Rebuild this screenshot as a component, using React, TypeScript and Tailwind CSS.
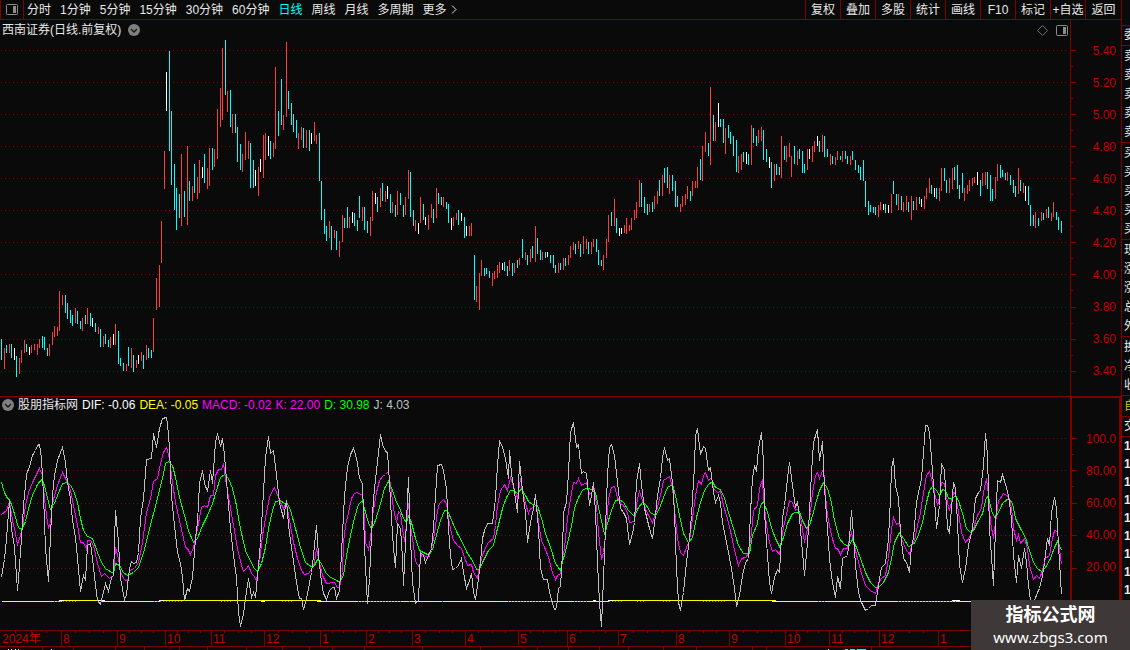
import type { ReactNode } from 'react'

const periods = ['分时', '1分钟', '5分钟', '15分钟', '30分钟', '60分钟', '日线', '周线', '月线', '多周期', '更多']
const tools = ['复权', '叠加', '多股', '统计', '画线', 'F10', '标记', '+自选', '返回']

// r = up, c = down, w = flat; then x, top, bottom on the chart canvas
const candles = `
c 1 339 360,r 4 348 369,c 6 345 353,r 9 344 353,c 11 344 358,w 14 348 360,c 16 356 377,r 19 358 374,r 21 350 363,r 24 340 353,
c 26 344 352,w 29 347 355,r 31 345 353,r 34 344 350,r 37 344 355,r 39 339 348,c 42 336 348,c 44 337 350,c 47 348 356,r 49 344 356,
r 52 332 345,r 54 326 337,r 57 327 336,r 59 291 331,r 62 295 305,c 65 295 313,c 67 303 319,c 70 310 323,c 72 315 326,r 75 308 323,
c 77 311 324,c 80 321 329,r 82 318 331,c 85 315 324,r 87 308 324,c 90 313 326,w 92 318 327,c 95 323 332,r 98 327 334,c 100 329 347,
r 103 336 347,c 105 334 344,c 108 340 347,r 110 337 348,w 113 334 345,r 115 324 345,c 118 331 364,c 120 358 366,c 123 363 371,r 126 364 371,
c 128 347 366,r 131 348 368,c 133 355 372,r 136 360 368,w 138 355 364,r 141 352 361,c 143 355 369,r 146 345 360,c 148 348 358,c 151 350 358,
r 153 318 352,r 156 278 310,r 159 265 307,r 161 221 263,r 164 151 189,w 166 72 111,c 169 51 151,c 171 111 185,c 174 164 210,c 176 188 230,
c 179 194 218,r 181 154 226,c 184 191 217,r 187 146 225,c 189 181 201,r 192 186 201,c 194 164 193,r 197 177 199,r 199 160 193,w 202 167 178,
c 204 154 183,r 207 168 189,r 209 148 186,c 212 148 170,r 214 149 167,r 217 109 159,r 220 88 127,r 222 48 120,c 225 40 95,r 227 91 112,
c 230 90 127,r 232 114 133,c 235 114 133,c 237 127 162,c 240 144 170,r 242 154 172,r 245 132 160,r 248 141 159,c 250 143 188,c 253 160 188,
w 255 170 186,r 258 167 196,w 260 159 172,r 263 135 178,r 265 133 160,w 268 136 156,c 270 141 159,r 273 143 157,r 275 67 149,c 278 111 136,
c 281 79 125,r 283 115 130,r 286 42 117,c 288 91 109,c 291 103 125,c 293 114 132,c 296 120 138,r 298 133 149,r 301 127 140,c 303 128 148,
r 306 130 148,c 309 130 151,w 311 133 144,r 314 122 141,r 316 135 144,c 319 133 181,c 321 181 220,c 324 209 234,c 326 226 241,r 329 221 238,
c 331 226 250,r 334 230 238,c 336 231 250,r 339 241 257,r 342 215 242,c 344 218 228,c 347 207 228,r 349 217 228,w 352 212 223,c 354 213 226,
c 357 220 231,c 359 196 218,r 362 207 221,c 364 207 230,c 367 221 233,r 370 217 236,r 372 191 221,w 375 193 204,c 377 197 212,r 380 188 207,
c 382 183 201,r 385 191 202,w 387 186 199,c 390 194 213,r 392 202 213,c 395 205 217,r 397 191 215,c 400 193 205,c 403 205 217,r 405 197 215,
r 408 170 199,c 410 172 217,c 413 210 226,r 415 220 231,w 418 223 234,r 420 197 223,c 423 204 220,w 425 217 225,r 428 215 230,r 431 204 218,
c 433 209 223,r 436 188 218,c 438 193 204,c 441 197 205,r 443 197 207,c 446 202 209,c 448 204 223,w 451 218 230,r 453 217 226,r 456 213 220,
c 458 210 225,w 461 213 221,c 464 217 238,w 466 226 236,r 469 226 236,r 471 223 236,c 474 255 300,r 476 286 302,r 479 273 310,r 481 260 276,
c 484 268 276,c 486 268 274,c 489 271 278,r 492 273 286,r 494 271 279,r 497 265 278,r 499 262 273,w 502 263 270,c 504 262 271,c 507 266 276,
r 509 260 271,c 512 263 276,r 514 263 273,c 517 260 268,r 519 258 265,c 522 239 258,r 525 252 260,c 527 255 265,r 530 249 262,c 532 246 258,
r 535 226 262,c 537 238 254,c 540 250 260,r 542 252 260,c 545 252 258,w 547 252 257,c 550 255 263,c 553 255 268,c 555 265 273,r 558 263 273,
c 560 263 270,r 563 258 270,c 565 258 266,r 568 255 265,r 570 246 258,r 573 242 250,c 575 244 254,r 578 241 249,c 580 244 257,r 583 236 254,
r 586 239 249,c 588 242 254,r 591 242 254,r 593 239 247,c 596 239 252,c 598 250 265,c 601 260 266,r 603 255 270,r 606 239 258,r 608 215 242,
c 611 212 226,r 614 199 226,c 616 218 233,w 619 228 236,w 621 228 234,r 624 225 233,r 626 218 234,r 629 225 231,r 631 218 230,r 634 210 220,
r 636 202 218,r 639 180 207,c 641 183 207,c 644 197 213,c 647 204 215,r 649 204 212,c 652 202 212,r 654 196 209,r 657 191 204,c 659 180 196,
r 662 175 196,c 664 168 183,c 667 167 188,r 669 175 194,c 672 175 191,c 675 181 207,c 677 196 207,r 680 204 212,r 682 196 207,r 685 194 205,
r 687 186 199,c 690 191 201,r 692 181 196,r 695 181 188,r 697 167 188,c 700 159 180,r 702 146 181,r 705 132 152,c 708 143 156,r 710 87 165,
c 713 115 141,r 715 122 141,w 718 103 127,c 720 119 127,c 723 119 143,r 725 128 154,c 728 125 138,c 730 132 144,c 733 136 156,c 736 140 172,
r 738 156 173,r 741 154 170,c 743 152 162,w 746 152 164,c 748 154 165,r 751 125 165,c 753 128 143,c 756 136 146,r 758 130 143,r 761 127 141,
c 763 130 160,c 766 149 162,w 769 157 168,c 771 162 188,r 774 164 181,c 776 164 175,c 779 167 175,r 781 136 178,c 784 146 160,r 786 146 162,
r 789 143 157,r 791 156 177,c 794 146 164,r 797 151 165,c 799 149 159,c 802 151 173,c 804 164 173,r 807 149 170,w 809 149 159,r 812 146 162,
r 814 141 152,w 817 136 146,c 819 141 152,r 822 135 152,c 824 136 157,c 827 149 157,r 830 154 165,c 832 156 164,r 835 157 165,r 837 151 160,
c 840 156 160,r 842 151 162,c 845 151 159,c 847 156 164,r 850 156 165,c 852 151 160,c 855 160 170,c 858 165 173,c 860 167 180,c 863 160 181,
c 865 181 207,c 868 201 215,c 870 205 212,c 873 207 213,c 875 207 215,r 878 205 217,r 880 202 210,w 883 204 210,c 885 204 213,w 888 205 213,
r 891 194 213,c 893 181 194,c 896 194 205,r 898 194 210,c 901 196 210,r 903 202 212,r 906 196 210,c 908 202 212,r 911 196 220,c 913 201 210,
r 916 197 210,c 919 197 204,w 921 199 207,r 924 196 209,r 926 188 199,r 929 178 193,c 931 185 194,w 934 188 197,c 936 188 199,r 939 188 201,
r 941 168 191,c 944 168 181,c 946 180 193,r 949 178 193,r 952 168 189,c 954 167 180,c 957 165 189,c 959 185 199,c 962 173 193,r 964 188 201,
r 967 185 194,r 969 180 191,r 972 178 186,r 974 177 183,w 977 172 185,c 980 180 196,r 982 173 186,r 985 172 185,c 987 172 189,c 990 175 201,
c 992 189 201,r 995 177 199,r 997 164 181,c 1000 165 178,c 1002 170 177,c 1005 173 180,r 1007 172 181,c 1010 175 185,c 1013 180 193,
c 1015 186 197,r 1018 168 194,c 1020 180 191,r 1023 183 193,w 1025 186 201,c 1028 186 205,c 1030 205 226,c 1033 215 226,r 1035 212 228,
c 1038 218 226,r 1041 212 221,c 1043 213 220,r 1046 209 218,c 1048 207 218,r 1051 213 221,r 1053 202 217,c 1056 212 220,c 1058 217 230,
c 1061 221 233`
  .split(',')
  .map((row) => {
    const [kind, x, top, bottom] = row.trim().split(' ')
    return { kind, x: Number(x), top: Number(top), bottom: Number(bottom) }
  })

const lineJ = `
1,577 4,559 6,538 9,500 11,528 14,547 17,590 19,565 21,538 23,505 26,474 29,466 32,455 35,450 37,445 39,444 41,458 43,495 45,548 48,581
50,535 52,495 54,475 57,460 60,452 62,447 65,462 67,482 70,498 72,520 75,537 77,558 80,591 83,575 85,580 87,545 90,543 92,558 95,585
97,600 100,604 103,592 105,583 108,591 111,577 113,575 115,510 118,542 120,578 124,599 126,594 129,568 131,561 133,563 136,562 138,552
140,518 143,498 146,459 151,458 153,433 156,447 159,428 162,418 166,417 167,423 169,448 171,495 174,525 177,552 180,563 182,577 184,600
187,588 189,591 192,577 195,538 197,522 199,483 202,470 204,483 207,491 210,470 212,483 215,442 217,433 220,446 222,438 224,455 227,492
230,528 233,555 236,577 238,612 240,626 243,613 245,598 248,578 251,597 253,592 255,597 258,565 260,542 262,508 265,457 268,436 270,453
273,450 276,475 279,502 283,518 286,500 288,525 291,547 294,568 297,588 299,598 301,598 303,609 306,598 308,588 311,572 313,555 316,525
318,555 321,582 323,593 326,599 329,590 332,587 334,587 336,598 339,590 341,552 344,495 347,467 350,454 353,448 355,454 357,463 359,478
362,483 364,545 366,585 367,603 369,578 371,535 373,498 376,470 378,452 380,434 382,444 385,451 387,452 389,482 391,518 393,548 395,567
397,523 400,528 402,558 403,585 405,542 408,477 410,538 412,582 415,603 418,600 420,552 423,555 425,562 428,555 431,548 433,528 435,495
437,465 441,464 443,470 446,488 448,528 450,555 452,569 455,568 458,565 461,558 463,572 466,588 469,580 471,573 473,592 475,599 477,585
480,562 482,538 484,530 487,523 492,523 495,498 497,465 499,440 502,447 505,458 508,478 509,450 511,473 514,492 517,512 519,461 522,490
525,512 527,542 530,522 533,508 535,494 538,528 540,568 543,579 547,579 549,592 552,603 554,609 556,608 558,588 560,586 562,552 563,512
566,502 568,472 570,432 573,422 576,447 578,444 581,473 583,471 586,473 589,505 591,495 593,482 595,512 597,562 599,602 601,626 603,578
605,528 607,475 609,447 611,444 614,455 617,482 620,508 623,512 626,518 629,544 632,533 634,522 636,482 639,463 641,485 644,508 647,520
649,528 652,538 655,515 657,495 660,478 662,457 664,447 667,460 669,458 672,482 674,512 676,568 678,602 680,610 683,592 686,562 689,538
691,515 694,465 695,435 697,428 700,454 703,446 705,448 708,470 710,467 713,492 715,502 718,495 720,502 722,522 725,537 728,552 731,568
734,588 736,606 739,595 742,575 745,562 748,558 750,512 752,477 754,466 756,470 758,448 761,432 763,462 764,512 767,555 769,582 771,593
774,577 777,569 779,572 782,518 784,505 787,478 789,462 792,485 795,507 797,501 799,518 802,552 804,575 807,542 809,512 811,472 813,442
817,429 819,460 822,441 824,488 827,528 829,558 832,582 835,597 837,576 840,588 842,558 847,555 849,538 851,510 853,535 855,565 858,592
861,602 865,610 868,608 871,605 875,605 878,585 881,567 885,563 888,538 890,498 891,468 893,458 895,485 898,498 900,532 903,558 906,562
909,572 911,545 913,538 916,502 921,478 923,452 925,425 927,425 929,432 931,458 933,485 936,528 939,505 941,463 944,470 947,528 949,532
951,508 953,482 955,488 957,522 959,565 962,582 965,568 968,545 972,528 975,498 978,492 980,490 983,465 985,433 987,455 989,528 993,585
995,528 997,480 1000,482 1002,474 1005,484 1008,495 1011,518 1013,555 1016,582 1018,555 1021,568 1024,548 1026,562 1028,585 1030,600
1034,600 1037,592 1039,588 1042,575 1044,562 1047,538 1049,545 1051,512 1054,497 1056,508 1058,545 1061,594`

const lineK = `
1,514 6,510 9,501 12,520 14,528 17,544 19,538 22,528 25,505 28,492 32,482 36,474 39,468 42,475 44,498 47,522 48,527 50,523 52,503 54,495
57,485 62,472 67,482 70,490 73,505 77,525 80,542 83,542 86,549 87,540 90,540 93,545 97,563 101,576 104,573 109,578 113,575 115,547
118,558 120,572 124,579 127,581 129,570 134,568 138,562 142,542 146,512 150,498 153,481 157,478 160,463 163,452 166,447 169,458 171,475
175,502 179,520 183,538 185,547 187,548 190,554 193,547 197,528 201,507 204,505 207,507 210,495 213,495 215,475 218,469 221,469 223,463
225,478 229,502 233,525 237,548 241,565 243,571 246,568 248,565 251,573 253,575 256,580 259,562 262,535 266,512 269,497 271,492 274,487
276,492 280,502 283,508 286,502 289,520 293,542 297,558 301,570 304,574 308,573 312,567 314,562 316,548 319,562 322,575 326,583 334,582
337,587 339,587 342,572 343,542 345,525 348,512 351,498 354,493 357,492 362,495 364,518 365,542 368,549 370,538 372,515 376,492 379,480
382,476 385,474 388,471 390,485 393,508 396,522 398,511 400,513 402,528 404,541 406,525 408,503 410,525 413,545 415,561 419,567 421,553
425,556 429,556 431,548 434,533 437,510 439,503 443,499 446,503 448,518 451,533 453,540 457,545 461,548 464,557 467,565 471,564 473,572
477,578 479,565 482,555 485,547 488,542 493,538 495,525 497,505 500,490 504,484 507,490 510,477 512,483 517,498 520,478 522,490 525,503
528,513 530,508 533,507 536,504 538,522 541,540 545,549 548,557 552,572 555,579 557,575 560,573 563,555 565,538 567,518 570,498 573,482
576,483 578,478 581,485 586,482 589,494 591,492 594,488 596,505 598,532 601,559 603,552 606,525 608,498 611,487 614,486 617,497 620,503
623,505 627,512 629,522 634,521 637,498 639,491 642,500 647,513 652,522 656,510 660,495 663,480 666,478 669,476 672,487 674,508 677,538
680,552 683,555 686,547 689,540 692,518 695,495 698,480 701,484 703,475 705,472 708,480 711,477 713,488 717,492 720,491 723,505 727,518
731,535 734,550 738,565 741,558 745,557 748,553 751,532 753,510 757,505 759,488 762,479 763,498 766,525 769,542 772,551 775,549 779,554
782,532 785,518 789,500 792,502 795,510 798,508 801,522 804,542 807,528 810,512 812,492 815,475 817,472 819,478 823,468 825,495 827,515
831,535 835,548 837,548 840,554 843,548 847,548 849,538 851,532 853,542 857,558 861,573 865,585 870,590 875,593 878,583 881,578 885,575
888,558 890,538 892,522 893,517 896,524 899,522 901,538 905,548 909,554 911,545 914,540 917,525 920,512 923,492 926,475 929,471 931,478
934,492 937,505 939,497 941,482 944,483 947,502 949,510 953,492 955,493 958,512 961,532 965,542 969,537 973,528 977,515 981,508 983,492
986,478 988,495 990,522 993,538 995,522 998,500 1000,498 1003,493 1006,495 1008,496 1011,507 1013,528 1016,540 1018,534 1020,543
1024,538 1027,548 1029,565 1033,579 1036,575 1039,578 1042,570 1045,558 1049,555 1052,538 1054,530 1057,531 1059,548 1061,564`

const lineD = `
1,482 4,492 7,498 9,499 12,507 15,517 18,527 21,529 25,521 28,508 32,495 37,484 41,479 44,485 47,498 50,509 53,505 57,495 62,483 67,482
71,486 74,493 77,502 80,518 83,530 87,536 92,538 97,552 101,562 105,568 113,573 115,563 119,565 123,572 127,575 133,572 138,567 143,552
147,537 152,517 157,498 162,478 165,463 168,461 172,465 175,477 179,497 184,515 188,530 193,542 197,538 202,525 207,515 212,503 216,490
220,477 224,474 228,478 232,488 236,505 239,523 243,542 246,553 249,558 253,567 257,571 261,563 265,547 268,528 272,510 275,501 280,500
284,503 287,503 290,510 295,528 300,547 305,562 312,567 314,565 317,559 321,563 325,572 330,577 335,579 339,582 343,575 346,555 350,535
354,517 358,504 362,500 365,512 368,522 371,529 375,520 380,503 384,488 388,481 392,490 396,502 399,507 403,518 406,522 408,516 411,522
415,538 419,550 423,552 427,554 432,550 435,538 440,520 444,510 447,510 452,522 457,533 462,542 467,553 472,560 476,569 479,569 483,560
488,550 493,545 497,528 502,508 506,497 510,490 513,490 517,493 521,488 525,495 528,501 532,504 537,505 541,518 545,533 550,547 555,563
560,570 563,558 567,543 571,525 574,508 578,497 582,490 587,487 592,490 595,492 598,507 602,525 604,534 607,523 611,510 615,500 619,499
623,502 628,510 634,516 638,507 642,502 646,505 650,512 655,515 659,508 663,497 667,487 672,484 675,495 679,515 683,533 688,542 692,537
696,517 700,502 704,490 708,484 712,481 715,487 720,489 724,498 728,512 733,528 738,545 743,553 749,553 752,535 757,523 760,505 763,501
767,512 771,527 775,538 779,546 783,537 787,523 792,513 799,511 802,520 806,528 809,525 812,515 816,500 819,490 823,482 827,488 831,502
834,520 839,538 843,543 848,546 852,539 856,547 860,558 865,572 870,582 875,587 878,587 883,582 888,572 891,558 894,542 899,532 903,538
908,546 913,544 917,537 922,522 926,502 929,490 932,486 936,490 939,495 942,489 945,490 948,498 952,498 955,495 958,500 962,513 966,528
970,532 973,530 977,522 982,513 986,497 988,496 991,510 994,517 998,512 1002,503 1008,498 1012,503 1015,518 1020,528 1025,537 1029,550
1033,562 1037,568 1041,571 1045,567 1050,558 1054,547 1057,541 1061,550`

const priceLabels = ['5.40', '5.20', '5.00', '4.80', '4.60', '4.40', '4.20', '4.00', '3.80', '3.60', '3.40']
const priceGrid = [50, 82, 114, 146, 178, 210, 242, 274, 307, 339, 371]
const kdjLabels = ['100.0', '80.00', '60.00', '40.00', '20.00']
const kdjGrid = [438, 470, 503, 535, 568]

const readings = [
  { text: 'DIF: -0.06', color: 'text-white' },
  { text: 'DEA: -0.05', color: 'text-[#ffff00]' },
  { text: 'MACD: -0.02', color: 'text-[#ff00ff]' },
  { text: 'K: 22.00', color: 'text-[#ff00ff]' },
  { text: 'D: 30.98', color: 'text-[#00ff00]' },
  { text: 'J: 4.03', color: 'text-[#c0c0c0]' },
]

const months = [
  { label: '2024年', span: 61 },
  { label: '8', span: 56 },
  { label: '9', span: 48 },
  { label: '10', span: 46 },
  { label: '11', span: 53 },
  { label: '12', span: 56 },
  { label: '1', span: 46 },
  { label: '2', span: 46 },
  { label: '3', span: 53 },
  { label: '4', span: 53 },
  { label: '5', span: 49 },
  { label: '6', span: 51 },
  { label: '7', span: 58 },
  { label: '8', span: 53 },
  { label: '9', span: 56 },
  { label: '10', span: 44 },
  { label: '11', span: 50 },
  { label: '12', span: 59 },
  { label: '1', span: 132 },
]
const totalSpan = months.reduce((sum, { span }) => sum + span, 0)

const quoteGroups = [
  ['委'],
  ['卖', '卖', '卖', '卖', '卖'],
  ['买', '买', '买', '买', '买'],
  ['现', '涨', '涨', '总', '外'],
  ['换', '净', '收'],
]

const macdTicks = [[53, 77], [153, 182], [220, 231], [281, 292], [357, 402], [408, 410], [441, 444], [507, 556], [573, 587], [608, 622], [636, 645], [662, 670], [702, 726], [817, 824], [897, 957]]
const difMarks = [[58, 63, 600], [97, 104, 600], [158, 163, 600], [260, 264, 601], [316, 321, 601], [592, 595, 600], [607, 613, 600], [771, 776, 601], [951, 959, 600]]

// separators between the tabs that start under the date axis
const tabEdges = [42, 73, 115, 144, 179, 207, 246, 282, 309, 332, 364, 422, 480, 537, 568, 599, 628, 663, 696, 752, 766, 871]

const fillOf = (kind: string) => (kind === 'r' ? '#ff3c3c' : kind === 'c' ? '#00ffff' : '#ffffff')

function PaneIcon() {
  return (
    <svg width="12" height="11" viewBox="0 0 12 11" fill="none" aria-hidden="true">
      <rect x="0.5" y="0.5" width="11" height="10" rx="1" stroke="#8c8c8c" />
      <rect x="7" y="2" width="3" height="7" fill="#8c8c8c" />
    </svg>
  )
}

function RoundChevron() {
  return (
    <svg width="12" height="12" viewBox="0 0 12 12" fill="none" aria-hidden="true">
      <circle cx="6" cy="6" r="6" fill="#808080" />
      <path d="M3 5l3 3 3-3" stroke="#141414" strokeWidth="1.3" />
    </svg>
  )
}

function GridLines({ rows }: { rows: number[] }) {
  return (
    <g stroke="#780808" strokeDasharray="1 3">
      {rows.map((y) => (
        <line key={y} x1="1" x2="1067" y1={y + 0.5} y2={y + 0.5} />
      ))}
    </g>
  )
}

function AxisTicks({ rows, top, height }: { rows: number[]; top: number; height: number }) {
  return (
    <svg width="5" height={height} viewBox={`0 ${top} 5 ${height}`} stroke="#800000" shapeRendering="crispEdges" className="shrink-0" aria-hidden="true">
      {rows.map((y, i) => (
        <g key={y}>
          <line x1="0" x2="5" y1={y + 0.5} y2={y + 0.5} />
          <line x1="0" x2="2" y1={y + 16.5} y2={y + 16.5} opacity={i === rows.length - 1 ? 0 : 1} />
        </g>
      ))}
    </svg>
  )
}

function AxisLabels({ labels, className }: { labels: string[]; className: string }) {
  return (
    <ul className={`flex-1 text-right text-[#c00000] ${className}`}>
      {labels.map((label) => (
        <li key={label} className="h-8 leading-8">
          {label}
        </li>
      ))}
    </ul>
  )
}

function Toolbar() {
  return (
    <nav className="flex h-5 items-stretch justify-between border-b border-[#800000] leading-[18px]">
      <div className="flex">
        <button aria-label="面板" className="flex w-6 items-center justify-center border-x border-[#800000]">
          <PaneIcon />
        </button>
        <div className="flex gap-[9px] pl-[3px]">
          {periods.map((name) => (
            <button key={name} className={name === '日线' ? 'text-[#00ffff]' : ''}>
              {name}
            </button>
          ))}
        </div>
        <svg width="6" height="9" viewBox="0 0 6 9" fill="none" stroke="#e0e0e0" className="ml-1 self-center" aria-hidden="true">
          <path d="M1 0.5l4 4-4 4" />
        </svg>
      </div>
      <div className="flex">
        {tools.map((name) => (
          <button key={name} className="w-[35px] border-l border-[#800000] text-center whitespace-nowrap last:w-9">
            {name}
          </button>
        ))}
      </div>
    </nav>
  )
}

function PricePanel() {
  return (
    <section className="flex">
      <div className="min-w-0 flex-1">
        <header className="flex h-5 items-center justify-between pr-0.5 pl-0.5 leading-[18px]">
          <div className="flex items-center gap-[7px]">
            <h1>西南证券(日线.前复权)</h1>
            <RoundChevron />
          </div>
          <div className="flex items-center gap-2">
            <svg width="11" height="11" viewBox="0 0 11 11" fill="none" stroke="#707070" aria-hidden="true">
              <path d="M5.5 0.5l5 5-5 5-5-5z" />
            </svg>
            <PaneIcon />
          </div>
        </header>
        <svg viewBox="0 40 1070 356" preserveAspectRatio="none" shapeRendering="crispEdges" className="block h-[356px] w-full">
          <GridLines rows={priceGrid} />
          {candles.map(({ kind, x, top, bottom }) => (
            <rect key={x} x={x} y={top} width="1" height={bottom - top} fill={fillOf(kind)} />
          ))}
        </svg>
      </div>
      <div className="flex w-[51px] border-l border-[#800000] pr-[5px]">
        <AxisTicks rows={priceGrid} top={20} height={376} />
        <AxisLabels labels={priceLabels} className="pt-[15px]" />
      </div>
    </section>
  )
}

function IndicatorPanel() {
  return (
    <section className="flex border-t border-[#800000]">
      <div className="min-w-0 flex-1">
        <header className="flex h-4 items-center gap-1 pl-0.5 leading-4">
          <RoundChevron />
          <h2>股朋指标网</h2>
          {readings.map(({ text, color }) => (
            <span key={text} className={color}>
              {text}
            </span>
          ))}
        </header>
        <svg viewBox="0 413 1070 217" preserveAspectRatio="none" shapeRendering="crispEdges" className="block h-[217px] w-full">
          <GridLines rows={kdjGrid} />
          <g transform="translate(0.5 0.5)" fill="none">
            <polyline points="1,601 61,601 61,600 101,600 101,601 159,601 159,600 320,600 320,601 609,601 609,600 775,600 775,601 1061,601" stroke="#ffff00" />
            {macdTicks.map(([from, to]) => (
              <line key={from} x1={from} x2={to} y1="601" y2="601" stroke="#ff3c3c" strokeDasharray="1 2" />
            ))}
            {difMarks.map(([from, to, y]) => (
              <line key={from} x1={from} x2={to} y1={y} y2={y} stroke="#ffffff" />
            ))}
            <polyline points={lineK} stroke="#ff00ff" />
            <polyline points={lineD} stroke="#00ff00" />
            <polyline points={lineJ} stroke="#c0c0c0" />
          </g>
        </svg>
      </div>
      <div className="flex w-[51px] border-x-2 border-t border-[#800000] pr-[3px]">
        <AxisTicks rows={kdjGrid} top={398} height={232} />
        <AxisLabels labels={kdjLabels} className="pt-[25px]" />
      </div>
    </section>
  )
}

function DateAxis() {
  let start = 0
  const ticks = months.flatMap(({ span }) => {
    const at = [1, 2, 3, 4].map((n) => Math.round(start + (span * n) / 4))
    start += span
    return at
  })
  return (
    <div className="border-y border-[#800000] pr-[51px] text-[#c00000]">
      <svg viewBox="0 0 1070 2" preserveAspectRatio="none" shapeRendering="crispEdges" className="block h-0.5 w-full" aria-hidden="true">
        {ticks.map((x) => (
          <rect key={x} x={x} y="0" width="1" height="2" fill="#800000" />
        ))}
      </svg>
      <ol className="flex h-[13px] leading-[13px]">
        {months.map(({ label, span }, i) => (
          <li
            key={i}
            className="shrink-0 border-l border-[#800000] pl-px first:border-l-transparent"
            style={{ width: `${(span / totalSpan) * 100}%` }}
          >
            {label}
          </li>
        ))}
      </ol>
    </div>
  )
}

// Tops of the bottom tabs, only three pixels high
function TabTops() {
  return (
    <svg viewBox="0 0 1121 3" preserveAspectRatio="none" shapeRendering="crispEdges" className="block h-[3px] w-full" aria-hidden="true">
      {tabEdges.map((x) => (
        <rect key={x} x={x} y="0" width="1" height="3" fill="#800000" />
      ))}
      <path d="M8 2h1v1h-1zM11 2h1v1h-1zM15 2h1v1h-1zM18 2h1v1h-1zM51 2h1v1h-1zM828 2h1v1h-1z" fill="#e8e8e8" />
      <path d="M845 2h3v1h-3zM850 2h5v1h-5zM857 2h9v1h-9z" fill="#00ffff" />
    </svg>
  )
}

function QuoteRow({ children }: { children: ReactNode }) {
  return <li className="h-[19px] pl-0.5 leading-[19px] whitespace-nowrap">{children}</li>
}

// Left edge of the quote list, cut off by the window
function QuoteStrip() {
  return (
    <aside className="w-[9px] shrink-0 overflow-hidden border-l border-[#800000] pt-[25px]">
      {quoteGroups.map((rows, i) => (
        <ul key={i} className={`border-t border-[#800000] ${rows.length > 1 ? 'pt-px' : ''}`}>
          {rows.map((row, j) => (
            <QuoteRow key={j}>{row}</QuoteRow>
          ))}
        </ul>
      ))}
      <ul className="border-t border-[#800000] pt-px text-[#c8c800]">
        <QuoteRow>自</QuoteRow>
      </ul>
      <ul className="border-t border-[#800000]">
        <QuoteRow>交</QuoteRow>
      </ul>
      <ul className="border-t border-[#800000] font-bold">
        {Array.from({ length: 9 }, (_, i) => (
          <li key={i} className="h-[18px] pl-0.5 leading-[18px]">
            1
          </li>
        ))}
      </ul>
    </aside>
  )
}

export default function App() {
  return (
    <div className="relative flex overflow-hidden bg-[#0a0a0a] font-['Liberation_Sans','Noto_Sans_CJK_SC',sans-serif] text-xs text-[#e8e8e8]">
      <main className="min-w-0 flex-1">
        <Toolbar />
        <PricePanel />
        <IndicatorPanel />
        <DateAxis />
        <TabTops />
      </main>
      <QuoteStrip />
      <footer className="absolute right-0 bottom-0 flex h-[50px] w-[159px] flex-col items-center justify-center bg-[#3e3838] text-white">
        <strong className="text-lg leading-6">指标公式网</strong>
        <span className="font-['Noto_Sans',sans-serif] text-[15px] leading-5">www.zbgs3.com</span>
      </footer>
    </div>
  )
}
